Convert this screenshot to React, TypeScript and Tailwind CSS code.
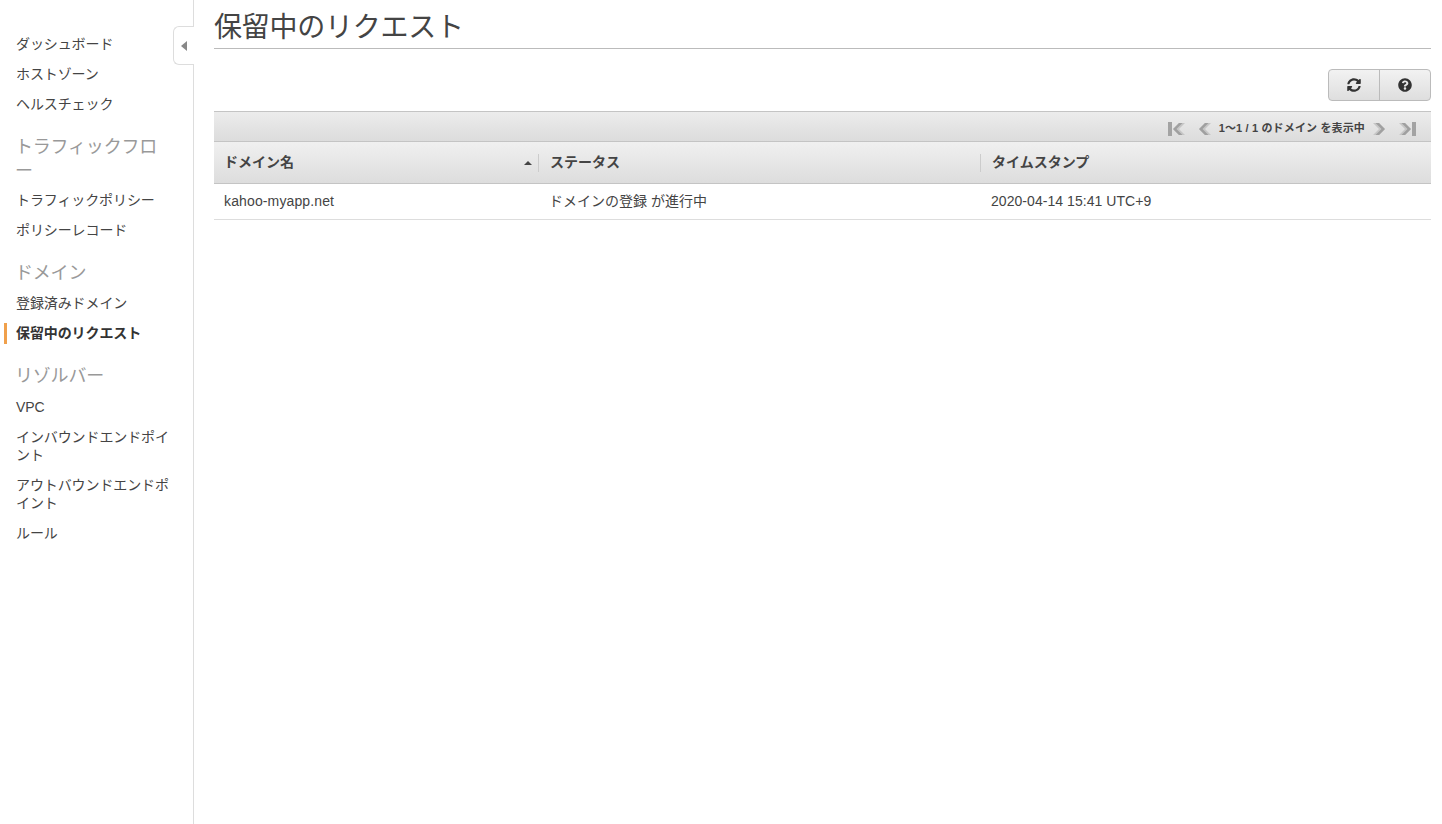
import { FaQuestionCircle, FaSyncAlt } from "react-icons/fa";

const font = "font-['Liberation_Sans','Noto_Sans_CJK_JP',sans-serif]";

function NavItem({ label, active }: { label: string; active?: boolean }) {
  return (
    <a
      className={`relative block py-[6px] pl-4 pr-5 text-[14px] leading-[18px] tracking-[-0.1px] ${
        active ? "font-bold text-[#333]" : "text-[#444]"
      }`}
    >
      {active && <span className="absolute left-1 top-[5px] h-[21px] w-[3px] bg-[#f0a04b]" />}
      {label}
    </a>
  );
}

function NavHeading({ label, className }: { label: string; className: string }) {
  return (
    <h3 className={`pl-[15px] pr-8 text-[18px] font-normal leading-6 tracking-[-0.2px] text-[#999] ${className}`}>
      {label}
    </h3>
  );
}

function Sidebar() {
  return (
    <aside className="relative w-[194px] shrink-0 border-r border-[#ddd] pt-[29px]">
      <button className="absolute -right-px top-[26px] flex h-[39px] w-[21px] items-center justify-center rounded-l-md border border-r-0 border-[#ddd] bg-white">
        <span className="h-0 w-0 border-y-[5px] border-r-[6px] border-y-transparent border-r-[#888]" />
      </button>
      <NavItem label="ダッシュボード" />
      <NavItem label="ホストゾーン" />
      <NavItem label="ヘルスチェック" />
      <NavHeading label="トラフィックフロー" className="mb-[2px] mt-4" />
      <NavItem label="トラフィックポリシー" />
      <NavItem label="ポリシーレコード" />
      <NavHeading label="ドメイン" className="mb-[3px] mt-4" />
      <NavItem label="登録済みドメイン" />
      <NavItem label="保留中のリクエスト" active />
      <NavHeading label="リゾルバー" className="mb-1 mt-4" />
      <NavItem label="VPC" />
      <NavItem label="インバウンドエンドポイント" />
      <NavItem label="アウトバウンドエンドポイント" />
      <NavItem label="ルール" />
    </aside>
  );
}

// pager arrows: thick chevron with a lighter one behind it, optional end bar
function PagerArrow({ dir, end }: { dir: "left" | "right"; end?: boolean }) {
  return (
    <svg
      viewBox={end ? "0 0 17 14" : "0 0 12 14"}
      className={`h-[14px] ${end ? "w-[17px]" : "w-[12px]"} ${dir === "right" ? "-scale-x-100" : ""}`}
      fill="none"
    >
      {end && <rect x="0" y="0" width="4" height="14" fill="#a3a3a3" />}
      <g transform={end ? "translate(5 0)" : undefined}>
        <path d="M6 1 L0 7 L6 13 H12 L6 7 L12 1 Z" fill="#c6c6c6" />
        <path d="M6 1 L0 7 L6 13 H9.5 L3.5 7 L9.5 1 Z" fill="#a0a0a0" />
      </g>
    </svg>
  );
}

function ColumnHead({ label, width, sorted }: { label: string; width?: string; sorted?: boolean }) {
  return (
    <div className={`relative flex h-full items-center pl-[10px] ${width ?? "flex-1"}`}>
      <span className="text-[14px] font-bold text-[#444]">{label}</span>
      {sorted && (
        <span className="absolute right-[6px] top-[19px] h-0 w-0 border-x-[4px] border-b-[4px] border-x-transparent border-b-[#444]" />
      )}
    </div>
  );
}

export default function App() {
  return (
    <div className={`flex h-[824px] bg-white ${font}`}>
      <Sidebar />
      <main className="ml-5 mr-[11px] flex-1">
        <h1 className="h-[49px] border-b border-[#bbb] text-[28px] font-normal leading-[55px] tracking-[-0.25px] text-[#444]">
          保留中のリクエスト
        </h1>

        <div className="mt-5 flex justify-end">
          <div className="flex h-[32px] w-[103px] rounded border border-[#bbb] bg-gradient-to-b from-[#f2f2f2] to-[#dedede] text-[#333]">
            <button className="flex flex-1 items-center justify-center border-r border-[#bbb] pr-px">
              <FaSyncAlt className="h-[14px] w-[14px]" />
            </button>
            <button className="flex flex-1 items-center justify-center pr-px">
              <FaQuestionCircle className="h-[14px] w-[14px]" />
            </button>
          </div>
        </div>

        <div className="mt-[10px] flex h-[31px] items-center justify-end border-y border-[#c4c4c4] bg-gradient-to-b from-[#ececec] to-[#dcdcdc] pr-[15px] pt-1">
          <PagerArrow dir="left" end />
          <span className="ml-[14px] flex"><PagerArrow dir="left" /></span>
          <span className="mx-2 text-[11px] font-bold tracking-[0.15px] text-[#444]">1〜1 / 1 のドメイン を表示中</span>
          <span className="flex"><PagerArrow dir="right" /></span>
          <span className="ml-[14px] flex"><PagerArrow dir="right" end /></span>
        </div>

        <div className="flex h-[42px] items-center border-b border-[#c4c4c4] bg-gradient-to-b from-[#f0f0f0] to-[#dddddd]">
          <ColumnHead label="ドメイン名" width="w-[324px]" sorted />
          <span className="mr-px h-[18px] w-px bg-[#ccc]" />
          <ColumnHead label="ステータス" width="w-[440px]" />
          <span className="mr-px h-[18px] w-px bg-[#ccc]" />
          <ColumnHead label="タイムスタンプ" />
        </div>

        <div className="flex h-[36px] items-center border-b border-[#ddd] text-[14px] text-[#444]">
          <span className="w-[326px] pl-[10px] tracking-[0.13px]">kahoo-myapp.net</span>
          <span className="w-[441px] pl-[9px]">ドメインの登録 が進行中</span>
          <span className="pl-[10px] tracking-[0.05px]">2020-04-14 15:41 UTC+9</span>
        </div>
      </main>
    </div>
  );
}
